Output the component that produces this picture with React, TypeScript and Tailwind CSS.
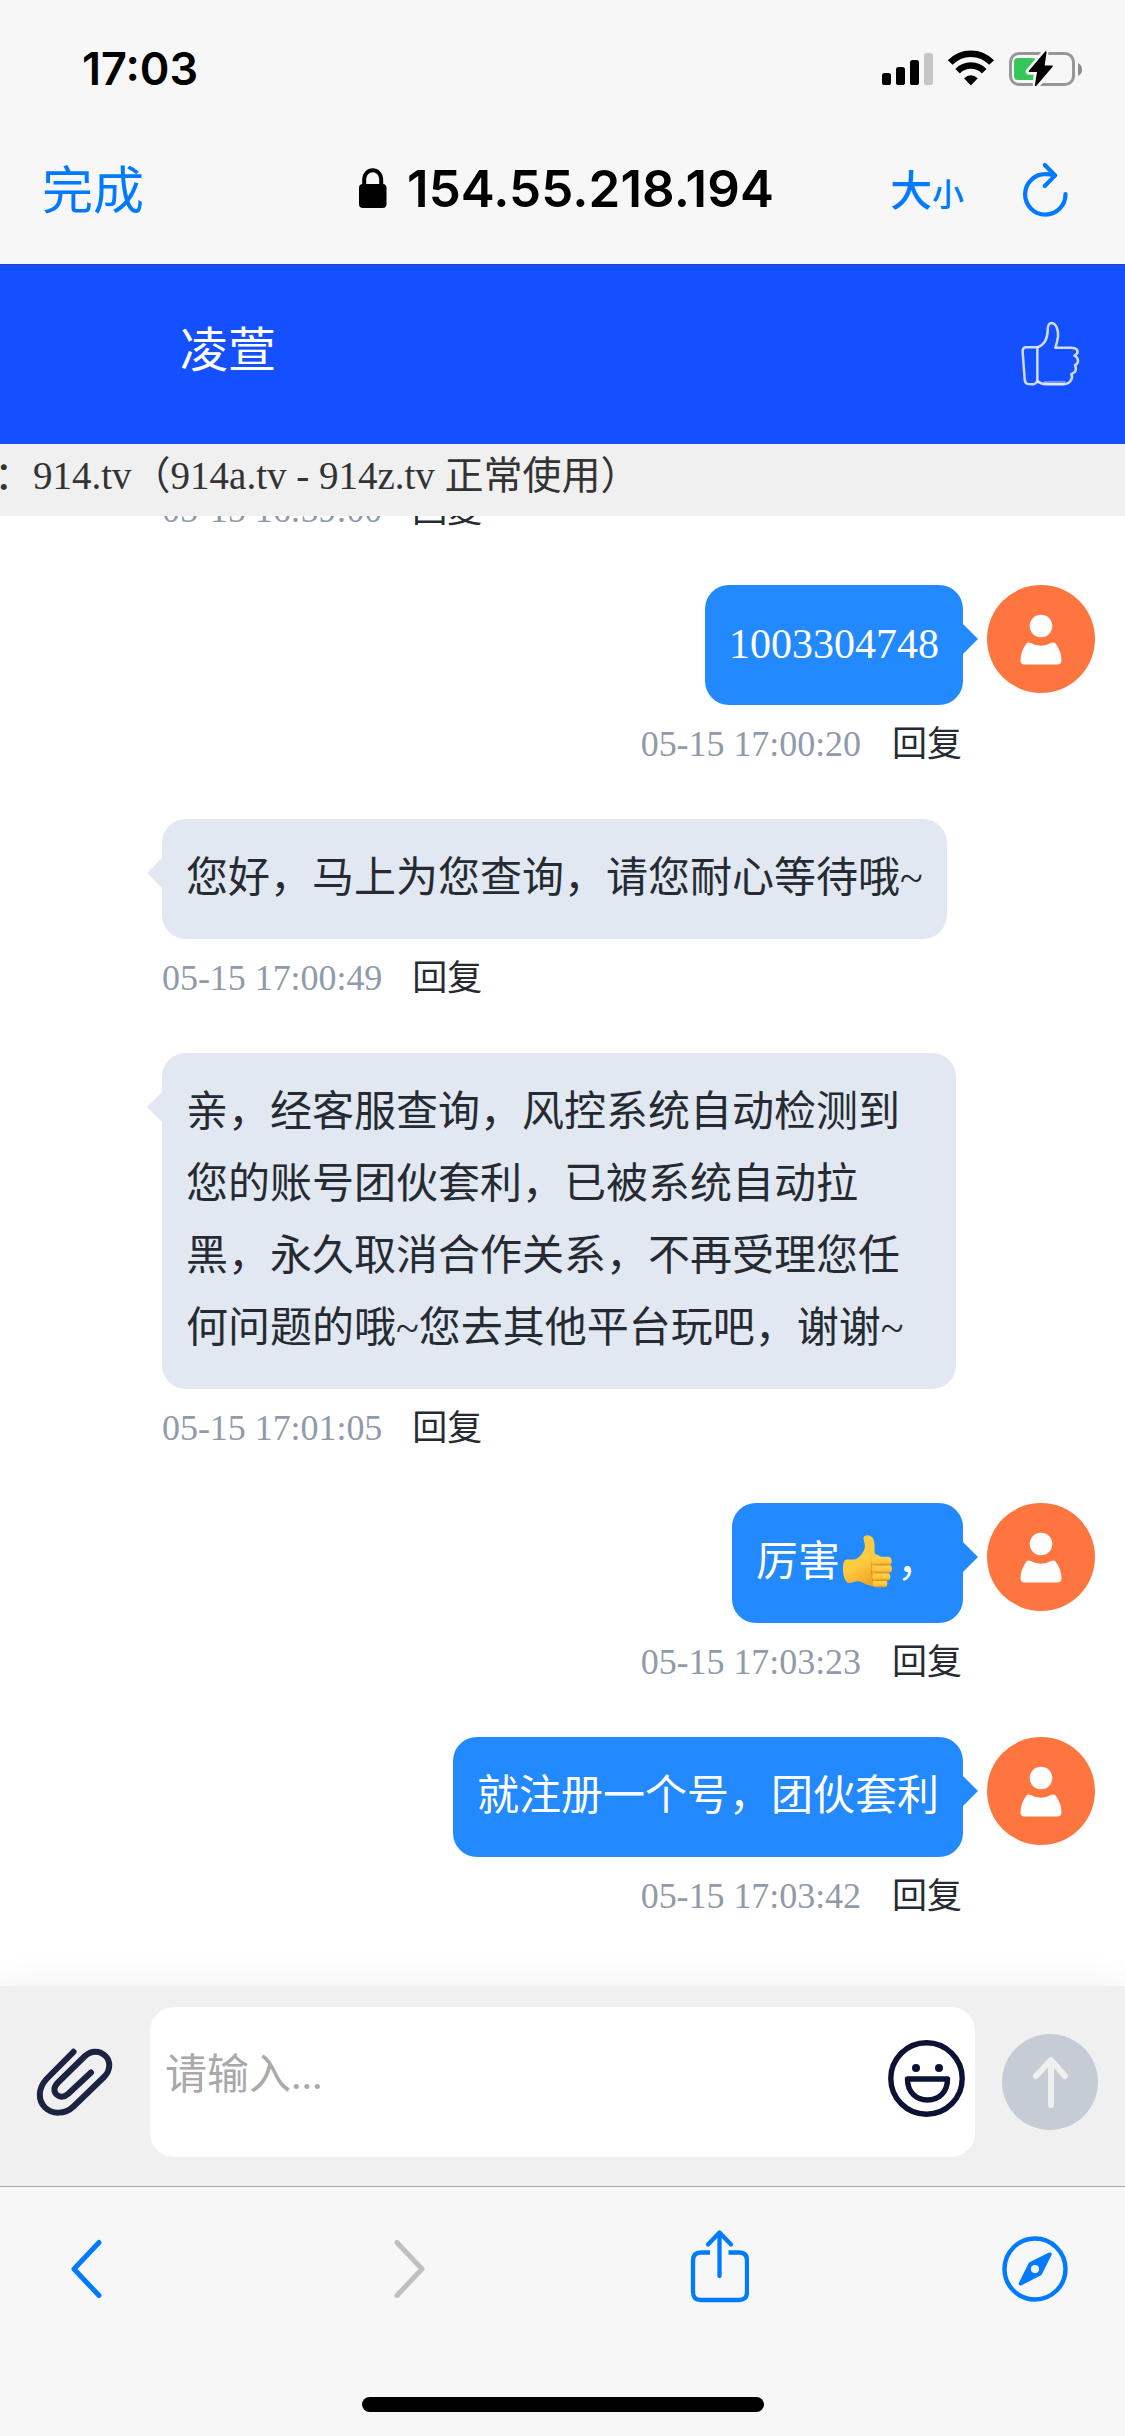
import React from "react";

const SERIF = "font-['Liberation_Serif','Noto_Sans_CJK_SC',serif]";
const SANS = "font-['Inter','Noto_Sans_CJK_SC',sans-serif]";

function StatusBar() {
  return (
    <div className="flex h-[138px] items-start justify-between pl-[82px] pr-[43px]">
      <div className="mt-[41px] text-[45px] font-semibold leading-[56px] text-black">17:03</div>
      <div className="mt-[50px] flex">
        <svg width="42" height="38" viewBox="0 0 42 38">
          <rect x="0" y="23" width="9" height="12" rx="2.6" />
          <rect x="14" y="17" width="9" height="18" rx="2.6" />
          <rect x="28" y="10" width="9" height="25" rx="2.6" />
        </svg>
        <svg className="-ml-[2px]" width="26" height="38" viewBox="-2 0 26 38">
          <rect x="0" y="3" width="9" height="32" rx="2.6" fill="#c6c6c6" />
        </svg>
        <svg className="-ml-[1px]" width="48" height="38" viewBox="0 0 48 38">
          <path d="M3.2 13.2 A28.5 28.5 0 0 1 44.6 13.2" fill="none" stroke="#000" strokeWidth="6.6" transform="translate(0 -.6)" />
          <path d="M10.6 21.6 A18.5 18.5 0 0 1 37.2 21.6" fill="none" stroke="#000" strokeWidth="6.4" transform="translate(0 -.4)" />
          <path d="M23.9 35.4 L17 28.3 Q23.9 22.2 30.8 28.3 Z" />
        </svg>
        <svg className="ml-[12px]" width="75" height="38" viewBox="0 0 75 38">
          <rect x="3.5" y="3.5" width="63" height="31" rx="8.5" fill="none" stroke="#979797" strokeWidth="3" />
          <path d="M71 13 Q75 15 75 19.5 Q75 24 71 26 Z" fill="#8d8d8d" />
          <rect x="7" y="8" width="22" height="22" rx="4" fill="#35c759" />
          <path d="M38 2.5 L22 21.5 H30 L29 35.5 L46 16 H37.5 Z" stroke="#f7f7f7" strokeWidth="6.5" strokeLinejoin="round" fill="#f7f7f7" />
          <path d="M38.8 2 L22.5 21.2 H31 L28.6 35.5 L45 16.2 H36.8 Z" stroke="#000" strokeWidth="1.6" strokeLinejoin="round" />
        </svg>
      </div>
    </div>
  );
}

function AddressBar() {
  return (
    <div className="flex h-[126px] items-start text-[#007aff]">
      <div className="ml-[42px] mt-[17px] w-[104px] whitespace-nowrap text-[51px] leading-[72px]">完成</div>
      <svg className="ml-[212px] mt-[30px]" width="30" height="42" viewBox="0 0 30 42">
        <rect x="1" y="16" width="27.5" height="24" rx="4" fill="#000" />
        <path d="M6.2 18 V11 A8.4 8.7 0 0 1 23.2 11 V18" fill="none" stroke="#000" strokeWidth="4" />
      </svg>
      <div className="ml-[19px] mt-[15px] w-[370px] whitespace-nowrap text-[51px] font-semibold leading-[72px] tracking-[0.1px] text-black">
        154.55.218.194
      </div>
      <div className="ml-[113px] mt-[17px] flex w-[76px] items-baseline whitespace-nowrap font-medium leading-[72px]">
        <span className="text-[42px]">大</span>
        <span className="text-[32px]">小</span>
      </div>
      <svg className="ml-[55px] mt-[22px]" width="52" height="60" viewBox="0 0 52 60" fill="none" stroke="#007aff" strokeWidth="4.2" strokeLinecap="round" strokeLinejoin="round">
        <path d="M44.5 34 A20.2 20.2 0 1 1 24.6 14.2 Q29 14.2 33.5 15.4" />
        <path d="M23.8 5 L34.2 15.4 L23.8 26" />
      </svg>
    </div>
  );
}

function TitleBar() {
  return (
    <div className="flex h-[180px] items-start justify-between border-t border-[#1a48c8] bg-[#1450ff]">
      <div className="ml-[180px] mt-[49px] text-[48px] leading-[72px] text-white">凌萱</div>
      <svg className="mr-[35px] mt-[45px]" width="80" height="90" viewBox="0 0 240 270" fill="none" stroke="#fff" strokeOpacity=".8" strokeWidth="7.5" strokeLinejoin="round">
        <path d="M82 112 H46 Q37 114 38 126 L44 208 Q45 220 54 222 L70 223 Q80 220 82 213 Z" />
        <path d="M82 112 C100 106 112 92 113 62 C113 42 118 39 125 39 C139 40 146 62 144 80 Q141 100 136 113 H184 C202 113 206 124 200 132 L193 137 Q204 142 204 154 Q202 164 195 165 Q200 176 195 186 L184 192 Q190 202 182 212 Q176 222 160 223 H108 Q92 222 82 213" />
        <path d="M102 219 H166" strokeOpacity=".4" strokeWidth="12" />
      </svg>
    </div>
  );
}

function Notice() {
  return (
    <div className={`${SERIF} z-10 h-[72px] overflow-hidden whitespace-nowrap bg-[#f0f0f0] text-[39px] leading-[64px] text-[#333]`}>
      <div className="-ml-[6px]">：914.tv（914a.tv - 914z.tv 正常使用）</div>
    </div>
  );
}

function ThumbEmoji() {
  return (
    <svg className="inline-block align-[-14px]" width="57" height="58" viewBox="60 155 171 174">
      <defs>
        <linearGradient id="skin" x1="0" y1="0" x2=".5" y2="1">
          <stop offset="0" stopColor="#ffce45" />
          <stop offset=".6" stopColor="#ffcb3f" />
          <stop offset="1" stopColor="#f2a526" />
        </linearGradient>
        <linearGradient id="finger" x1="0" y1="0" x2="0" y2="1">
          <stop offset="0" stopColor="#ffd351" />
          <stop offset=".65" stopColor="#ffc53a" />
          <stop offset="1" stopColor="#e39a1c" />
        </linearGradient>
      </defs>
      <path d="M130 173 C134 162 153 162 160 176 C168 196 160 212 166 222 C190 226 200 250 196 280 C194 304 186 318 160 317 C138 316 126 304 116 303 C102 302 94 310 84 308 C70 300 66 270 71 246 C74 232 92 240 107 237 C124 227 138 208 134 190 Z" fill="url(#skin)" />
      <path d="M156 236 Q152 276 160 312" fill="none" stroke="#d98c14" strokeWidth="3" />
      <rect x="158" y="299" width="44" height="22" rx="10" fill="url(#finger)" />
      <rect x="157" y="277" width="54" height="24" rx="12" fill="url(#finger)" />
      <rect x="155" y="253" width="61" height="25" rx="12" fill="url(#finger)" />
      <rect x="154" y="229" width="61" height="26" rx="12" fill="url(#finger)" />
      <path d="M164 254 H208 M164 278 H206 M166 300 H200" stroke="#cf8510" strokeOpacity=".75" strokeWidth="2.5" />
    </svg>
  );
}

function Avatar() {
  return (
    <div className="ml-6 flex size-[108px] shrink-0 items-center justify-center rounded-full bg-[#ff7540]">
      <svg width="42" height="51" viewBox="0 0 42 51" fill="#fff">
        <circle cx="21" cy="12" r="11.3" />
        <path d="M6.5 29.5 Q7.8 28 10 28.8 Q21 34.5 32 28.8 Q34.2 28 35.5 29.5 Q41.3 37 41.5 46.5 Q41.3 50.3 37.5 50.5 H4.5 Q.7 50.3 .5 46.5 Q.7 37 6.5 29.5 Z" />
      </svg>
    </div>
  );
}

function Meta({ time, mine }: { time: string; mine?: boolean }) {
  return (
    <div className={mine ? "flex h-[114px] shrink-0 justify-end gap-[30px] pr-[162px] pt-[12px] text-[36px] leading-[54px]" : "flex h-[114px] shrink-0 gap-[29px] pl-[162px] pt-[12px] text-[36px] leading-[54px]"}>
      <span className="tracking-[-0.05px] text-[#8f9bab]">{time}</span>
      <span className="w-[72px] pt-px text-center text-[35px] text-[#262b33]">回复</span>
    </div>
  );
}

function Sent({ time, children }: { time: string; children: React.ReactNode }) {
  return (
    <div className="shrink-0">
      <div className="flex h-[120px] justify-end pr-[30px]">
        <div className="relative h-[120px] whitespace-nowrap rounded-[24px] bg-[#2389ff] px-6 pb-[25px] pt-[23px] text-[42px] leading-[72px] text-white">
          {children}
          <span className="absolute -right-[15px] top-[39px] border-y-[15px] border-l-[15px] border-y-transparent border-l-[#2389ff]" />
        </div>
        <Avatar />
      </div>
      <Meta time={time} mine />
    </div>
  );
}

function Received({ time, children }: { time: string; children: React.ReactNode }) {
  return (
    <div className="shrink-0">
      <div className="flex pl-[162px]">
        <div className="relative max-w-[794px] rounded-[24px] bg-[#e2e8f1] px-6 pb-[25px] pt-[23px] text-[42px] leading-[72px] text-[#262b33]">
          {children}
          <span className="absolute -left-[15px] top-[39px] border-y-[15px] border-r-[15px] border-y-transparent border-r-[#e2e8f1]" />
        </div>
      </div>
      <Meta time={time} />
    </div>
  );
}

function InputBar() {
  return (
    <div className="flex h-[200px] items-start bg-[#f0f0f0] shadow-[0_0_36px_rgba(0,0,0,0.07)]">
      <svg className="ml-[35px] mt-[61px]" width="78" height="70" viewBox="0 0 78 70" fill="none" stroke="#1c2242" strokeWidth="6" strokeLinecap="round" strokeLinejoin="round">
        <path d="M38.5 4.8 L12 31.5 C2 42 3.5 54 10 60.5 C17 67.5 30 67.5 38.5 59.5 L69 30 C76 23 75.500 14 70.500 9 C64.500 3 56 3.500 50 9 L23 35.500 C18.500 40 18.500 44.500 21.500 47.500 C24.500 50.500 29 50.500 33 47 L56 25.500" />
      </svg>
      <div className="ml-[37px] mt-[21px] flex h-[150px] w-[825px] items-start justify-between rounded-[24px] bg-white pl-[15px] pr-[10px]">
        <div className="mt-[32px] text-[42px] leading-[72px] text-[#a9a9a9]">请输入...</div>
        <svg className="mt-[33px]" width="77" height="77" viewBox="0 0 77 77" fill="none" stroke="#0b1233" strokeWidth="5.4" strokeLinejoin="round">
          <circle cx="38.500" cy="38.500" r="35.700" />
          <circle cx="28" cy="28" r="4" fill="#0b1233" stroke="none" />
          <circle cx="51" cy="28" r="4" fill="#0b1233" stroke="none" />
          <path d="M19.500 39 H59.500 C59.500 52 51 60 39.500 60 S19.500 52 19.500 39 Z" />
        </svg>
      </div>
      <div className="ml-[27px] mt-[48px] flex size-[96px] items-center justify-center rounded-full bg-[#c5ccd5]">
        <svg width="40" height="56" viewBox="0 0 40 56" fill="none" stroke="#efefef" strokeWidth="6" strokeLinecap="round" strokeLinejoin="round">
          <path d="M21 51 V7 M6 22 L21 6 L35 22" />
        </svg>
      </div>
    </div>
  );
}

function Toolbar() {
  return (
    <div className="z-20 flex h-[250px] shrink-0 flex-col border-t border-[#a9a9a9] bg-[#f7f7f7]">
      <div className="flex h-[210px] items-start">
        <svg className="ml-[69px] mt-[49px]" width="36" height="66" viewBox="0 0 36 66" fill="none" stroke="#007aff" strokeWidth="5" strokeLinecap="round" strokeLinejoin="round">
          <path d="M30 6.500 L5 33 L30 59.500" />
        </svg>
        <svg className="ml-[286px] mt-[49px]" width="36" height="66" viewBox="0 0 36 66" fill="none" stroke="#c0c0c0" strokeWidth="5" strokeLinecap="round" strokeLinejoin="round">
          <path d="M6 6.500 L31 33 L6 59.500" />
        </svg>
        <svg className="ml-[262px] mt-[41px]" width="60" height="76" viewBox="0 0 60 76" fill="none" stroke="#007aff" strokeWidth="4.300" strokeLinecap="round" strokeLinejoin="round">
          <path strokeLinecap="butt" d="M21 24.500 H12 Q4 24.500 4 32.500 V64 Q4 72 12 72 H50 Q58 72 58 64 V32.500 Q58 24.500 50 24.500 H39.500" />
          <path d="M30.500 48 V5 M19 16.500 L30.500 4.500 L42 16.500" />
        </svg>
        <svg className="ml-[253px] mt-[49px]" width="66" height="66" viewBox="0 0 66 66">
          <circle cx="33" cy="33" r="30.500" fill="none" stroke="#007aff" strokeWidth="4.400" />
          <path fillRule="evenodd" fill="#007aff" d="M27 26.500 L46.500 16.800 Q50.500 15.600 49.500 19 L39.500 39 L19.500 49.200 Q16 50.400 16.800 47 Z M33 29 A4.100 4.100 0 1 0 33 37.200 A4.100 4.100 0 1 0 33 29 Z" />
        </svg>
      </div>
      <div className="ml-[362px] h-[15px] w-[402px] rounded-full bg-black" />
    </div>
  );
}

export default function App() {
  return (
    <div className={`${SANS} flex h-[2436px] w-[1125px] flex-col overflow-hidden bg-white`}>
      <div className="h-[264px] shrink-0 bg-[#f7f7f7]">
        <StatusBar />
        <AddressBar />
      </div>
      <TitleBar />
      <Notice />
      <div className={`${SERIF} flex h-[1470px] shrink-0 flex-col justify-end overflow-hidden pb-[15px]`}>
        <Meta time="05-15 16:59:00" />
        <Sent time="05-15 17:00:20">1003304748</Sent>
        <Received time="05-15 17:00:49">您好，马上为您查询，请您耐心等待哦~</Received>
        <Received time="05-15 17:01:05">
          亲，经客服查询，风控系统自动检测到您的账号团伙套利，已被系统自动拉黑，永久取消合作关系，不再受理您任何问题的哦~您去其他平台玩吧，谢谢~
        </Received>
        <Sent time="05-15 17:03:23">厉害<ThumbEmoji />，</Sent>
        <Sent time="05-15 17:03:42">就注册一个号，团伙套利</Sent>
      </div>
      <div className={`${SERIF} z-10 shrink-0`}>
        <InputBar />
      </div>
      <Toolbar />
    </div>
  );
}
